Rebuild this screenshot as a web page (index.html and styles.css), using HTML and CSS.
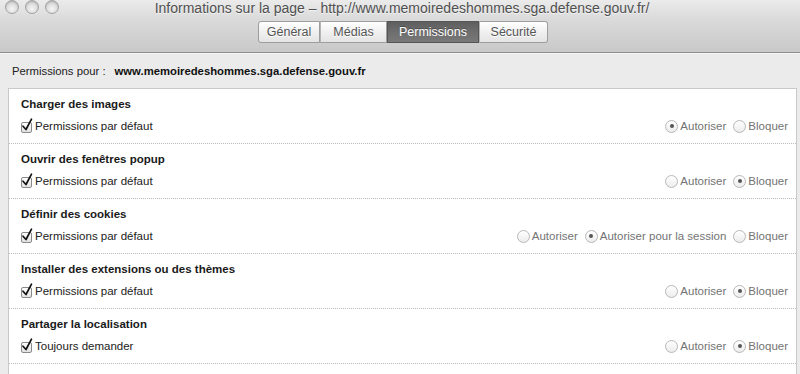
FILE: index.html
```html
<!DOCTYPE html>
<html lang="fr">
<head>
<meta charset="utf-8">
<title>Informations sur la page</title>
<link rel="stylesheet" href="styles.css">
</head>
<body>
<div class="window">
  <header class="titlebar">
    <div class="title-row">
      <div class="lights">
        <span class="light"></span><span class="light"></span><span class="light"></span>
      </div>
      <div class="title">Informations sur la page – http://www.memoiredeshommes.sga.defense.gouv.fr/</div>
      <div></div>
    </div>
    <nav class="tabs">
      <span class="tab t-gen">Général</span>
      <span class="tab t-med">Médias</span>
      <span class="tab t-perm active">Permissions</span>
      <span class="tab t-sec">Sécurité</span>
    </nav>
  </header>

  <div class="for-line">
    <span class="for-label">Permissions pour :</span>
    <span class="for-domain">www.memoiredeshommes.sga.defense.gouv.fr</span>
  </div>

  <section class="panel">
    <div class="row">
      <div class="row-title">Charger des images</div>
      <div class="row-line">
        <label class="check"><span class="box"><svg viewBox="0 0 12 14" class="tick"><path d="M2 8.2 L5 11.5 L10.5 1.2" /></svg></span>Permissions par défaut</label>
        <div class="radios">
          <span class="radio on"></span><span class="rlabel">Autoriser</span>
          <span class="radio"></span><span class="rlabel">Bloquer</span>
        </div>
      </div>
    </div>

    <div class="row">
      <div class="row-title">Ouvrir des fenêtres popup</div>
      <div class="row-line">
        <label class="check"><span class="box"><svg viewBox="0 0 12 14" class="tick"><path d="M2 8.2 L5 11.5 L10.5 1.2" /></svg></span>Permissions par défaut</label>
        <div class="radios">
          <span class="radio"></span><span class="rlabel">Autoriser</span>
          <span class="radio on"></span><span class="rlabel">Bloquer</span>
        </div>
      </div>
    </div>

    <div class="row">
      <div class="row-title">Définir des cookies</div>
      <div class="row-line">
        <label class="check"><span class="box"><svg viewBox="0 0 12 14" class="tick"><path d="M2 8.2 L5 11.5 L10.5 1.2" /></svg></span>Permissions par défaut</label>
        <div class="radios">
          <span class="radio"></span><span class="rlabel">Autoriser</span>
          <span class="radio on"></span><span class="rlabel">Autoriser pour la session</span>
          <span class="radio"></span><span class="rlabel">Bloquer</span>
        </div>
      </div>
    </div>

    <div class="row">
      <div class="row-title">Installer des extensions ou des thèmes</div>
      <div class="row-line">
        <label class="check"><span class="box"><svg viewBox="0 0 12 14" class="tick"><path d="M2 8.2 L5 11.5 L10.5 1.2" /></svg></span>Permissions par défaut</label>
        <div class="radios">
          <span class="radio"></span><span class="rlabel">Autoriser</span>
          <span class="radio on"></span><span class="rlabel">Bloquer</span>
        </div>
      </div>
    </div>

    <div class="row">
      <div class="row-title">Partager la localisation</div>
      <div class="row-line">
        <label class="check"><span class="box"><svg viewBox="0 0 12 14" class="tick"><path d="M2 8.2 L5 11.5 L10.5 1.2" /></svg></span>Toujours demander</label>
        <div class="radios">
          <span class="radio"></span><span class="rlabel">Autoriser</span>
          <span class="radio on"></span><span class="rlabel">Bloquer</span>
        </div>
      </div>
    </div>
  </section>
</div>
</body>
</html>
```

FILE: styles.css
```css
* { box-sizing: border-box; }
html, body {
  margin: 0;
  padding: 0;
  width: 800px;
  height: 374px;
  overflow: hidden;
  background: #ebebeb;
  font-family: "Liberation Sans", Arial, sans-serif;
}
.window {
  display: flex;
  flex-direction: column;
  height: 374px;
}
.titlebar {
  height: 53px;
  background: linear-gradient(#ebebeb, #d9d9d9 40%, #c9c9c9);
  border-bottom: 1px solid #8f8f8f;
  box-shadow: 0 1px 0 #f6f6f6;
  display: flex;
  flex-direction: column;
}
.title-row {
  display: grid;
  grid-template-columns: 1fr auto 1fr;
  height: 19px;
  align-items: start;
}
.lights {
  display: flex;
  gap: 6px;
  padding: 0 0 0 5px;
}
.light {
  width: 14px;
  height: 14px;
  border-radius: 50%;
  border: 1px solid #a3a3a3;
  background: radial-gradient(circle at 50% 65%, #f6f6f6 0%, #e0e0e0 45%, #bdbdbd 100%);
  box-shadow: inset 0 1px 1px rgba(0,0,0,0.12);
}
.title {
  font-size: 14px;
  line-height: 17px;
  color: #505050;
  text-shadow: 0 1px 0 rgba(255,255,255,0.6);
  padding-left: 4px;
}
.tabs {
  display: flex;
  justify-content: center;
  padding-left: 6px;
  margin-top: 2px;
}
.tab {
  height: 22px;
  line-height: 20px;
  font-size: 12.5px;
  text-align: center;
  color: #555;
  background: linear-gradient(#ffffff, #f0f0f0 50%, #e4e4e4);
  border: 1px solid #9e9e9e;
  border-left: 1px solid #b5b5b5;
  text-shadow: 0 1px 0 #fff;
}
.t-gen { width: 62px; border-left-color: #9e9e9e; border-radius: 3px 0 0 3px; }
.t-med { width: 67px; }
.t-perm { width: 92px; }
.t-sec { width: 69px; border-radius: 0 3px 3px 0; }
.tab.active {
  background: linear-gradient(#5f5f5f, #6e6e6e 50%, #787878);
  color: #fff;
  border-color: #555;
  text-shadow: 0 -1px 0 rgba(0,0,0,0.3);
}
.for-line {
  height: 35px;
  padding: 11px 12px 0 12px;
  font-size: 11.3px;
  line-height: 14px;
  color: #222;
  display: flex;
  gap: 9px;
}
.for-domain {
  font-weight: bold;
  color: #111;
}
.panel {
  flex: 1;
  margin: 0 3px 0 8px;
  background: #fff;
  border: 1px solid #c9c9c9;
  border-bottom: none;
}
.row {
  padding: 8px 8px 9px 12px;
  border-bottom: 1px dotted #bcbcbc;
  display: flex;
  flex-direction: column;
  gap: 7px;
}
.row-title {
  font-size: 11.5px;
  line-height: 14px;
  font-weight: bold;
  color: #1a1a1a;
}
.row-line {
  display: flex;
  justify-content: space-between;
  align-items: center;
  height: 16px;
  font-size: 11.5px;
}
.check {
  display: flex;
  align-items: center;
  gap: 3px;
  color: #222;
}
.box {
  position: relative;
  width: 11px;
  height: 11px;
  border: 1px solid #8a8a8a;
  border-radius: 2px;
  background: linear-gradient(#fdfdfd, #e2e2e2);
  margin-top: 2px;
}
.tick {
  position: absolute;
  left: -1px;
  top: -5px;
  width: 12px;
  height: 14px;
  fill: none;
  stroke: #111;
  stroke-width: 1.7;
  stroke-linecap: round;
  stroke-linejoin: round;
}
.radios {
  display: flex;
  align-items: center;
  color: #737373;
}
.radio {
  width: 13px;
  height: 13px;
  border-radius: 50%;
  border: 1px solid #b8b8b8;
  background: linear-gradient(#ffffff, #ececec);
  margin: 0 2px 0 7px;
  display: flex;
  align-items: center;
  justify-content: center;
}
.radio.on::after {
  content: "";
  width: 4px;
  height: 4px;
  border-radius: 50%;
  background: #555;
}
.rlabel {
  line-height: 14px;
}
```
